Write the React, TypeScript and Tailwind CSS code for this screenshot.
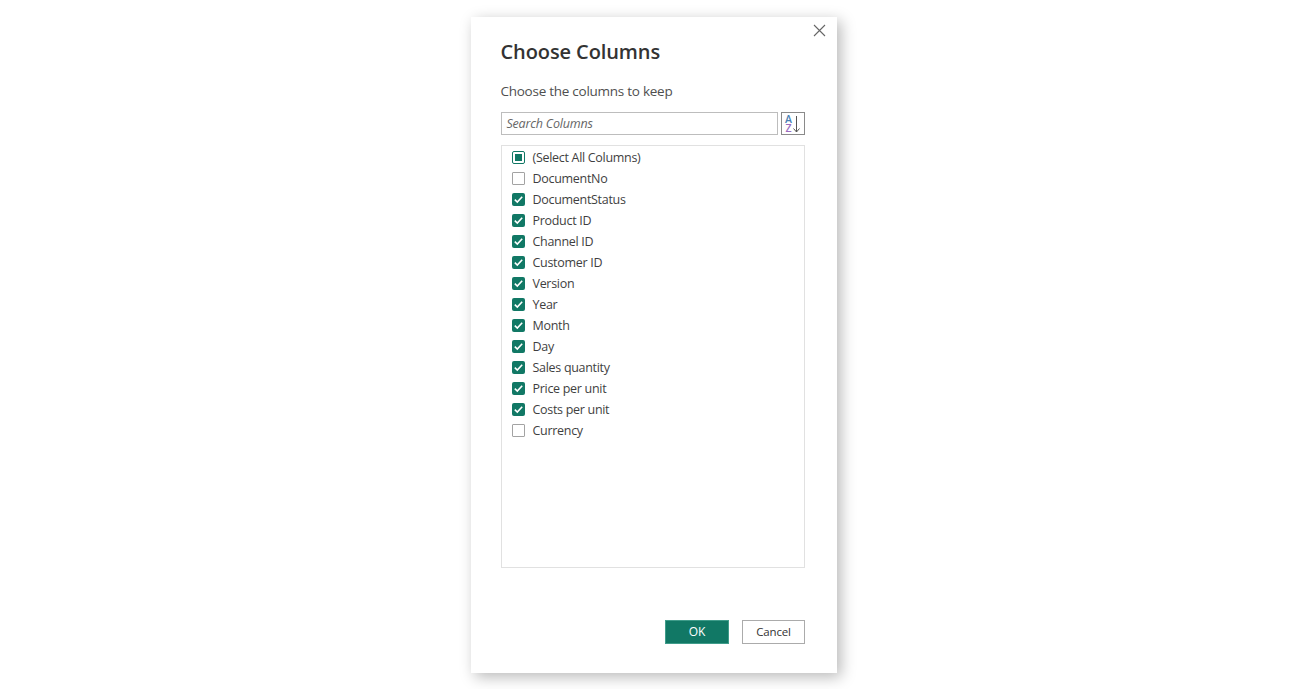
const columns = [
  { name: 'DocumentNo', checked: false },
  { name: 'DocumentStatus', checked: true },
  { name: 'Product ID', checked: true },
  { name: 'Channel ID', checked: true },
  { name: 'Customer ID', checked: true },
  { name: 'Version', checked: true },
  { name: 'Year', checked: true },
  { name: 'Month', checked: true },
  { name: 'Day', checked: true },
  { name: 'Sales quantity', checked: true },
  { name: 'Price per unit', checked: true },
  { name: 'Costs per unit', checked: true },
  { name: 'Currency', checked: false },
]

function Row({ name, checked, partial }: { name: string; checked?: boolean; partial?: boolean }) {
  return (
    <div className="flex h-[21px] items-center gap-[8px] pl-[10px]">
      {partial ? (
        <span className="flex h-[13px] w-[13px] items-center justify-center rounded-[2px] border border-[#117865] bg-white">
          <span className="h-[7px] w-[7px] bg-[#117865]" />
        </span>
      ) : checked ? (
        <span className="flex h-[13px] w-[13px] items-center justify-center rounded-[2px] bg-[#117865]">
          <svg width="11" height="11" viewBox="0 0 11 11" fill="none">
            <path d="M1.8 5.6 L4.3 8 L9.2 2.8" stroke="white" strokeWidth="1.6" />
          </svg>
        </span>
      ) : (
        <span className="h-[13px] w-[13px] rounded-[1px] border border-[#a3a3a3] bg-white" />
      )}
      <span className="pt-[2px] text-[12.5px] tracking-[-0.3px] text-[#3f3f3f]">{name}</span>
    </div>
  )
}

export default function App() {
  return (
    <div className="h-[689px] w-full overflow-hidden bg-white pt-[17px] font-['Open_Sans',sans-serif]">
      <div className="relative ml-[471px] flex h-[656px] w-[366px] flex-col bg-white pl-[29.5px] pr-[31px] shadow-[4px_4px_14px_rgba(0,0,0,0.28)]">
        <button className="absolute right-[11px] top-[7px] text-[#666666]">
          <svg width="13" height="13" viewBox="0 0 13 13" fill="none" stroke="currentColor" strokeWidth="1.1">
            <path d="M1 1 L12 12 M12 1 L1 12" />
          </svg>
        </button>
        <h1 className="mt-[20px] text-[20px] font-semibold leading-[30px] tracking-[-0.1px] text-[#333333]">Choose Columns</h1>
        <p className="mt-[14px] text-[13.5px] leading-[20px] tracking-[-0.26px] text-[#4f4f4f]">Choose the columns to keep</p>
        <div className="mt-[11px] flex w-[304px] gap-[3px]">
          <div className="flex h-[23px] w-[277px] items-center border border-[#bdbdbd] pl-[5px] pt-[2px] text-[12.5px] italic tracking-[-0.2px] text-[#666666]">Search Columns</div>
          <button className="flex h-[23px] w-[24px] items-center justify-center gap-[1px] border border-[#8a8a8a]">
            <span className="flex flex-col text-[10.5px] font-semibold leading-[9px]">
              <span className="text-[#4a7fb5]">A</span>
              <span className="text-[#9a6cc0]">Z</span>
            </span>
            <svg width="7" height="18" viewBox="0 0 7 18" fill="none">
              <path d="M3.5 1 V17 M0.5 13.5 L3.5 17 L6.5 13.5" stroke="#555555" strokeWidth="1" />
            </svg>
          </button>
        </div>
        <div className="mt-[10px] h-[423px] w-[304.5px] border border-[#e1e1e1] pt-[1px]">
          <Row name="(Select All Columns)" partial />
          {columns.map((c) => (
            <Row key={c.name} name={c.name} checked={c.checked} />
          ))}
        </div>
        <div className="mt-[52px] flex w-[304.5px] justify-end gap-[13px]">
          <button className="h-[24px] w-[64px] border border-[#3f9c8a] bg-[#117865] text-[12px] text-white">OK</button>
          <button className="h-[24px] w-[63px] border border-[#ababab] bg-white text-[11.5px] tracking-[-0.2px] text-[#333333]">Cancel</button>
        </div>
      </div>
    </div>
  )
}
